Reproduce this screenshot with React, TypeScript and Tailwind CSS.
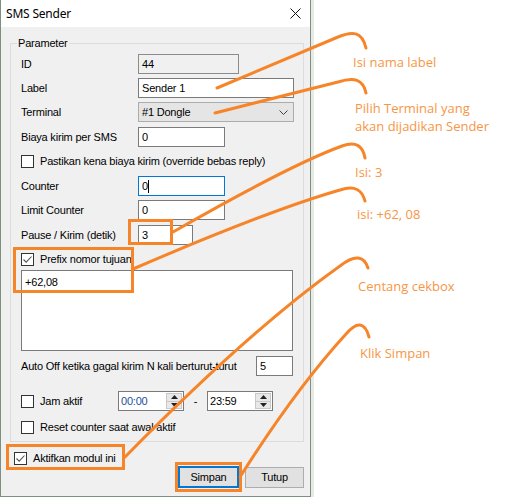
const Check = ({ checked = false }: { checked?: boolean }) => (
  <span className="w-[13px] h-[13px] border border-[#333333] bg-white flex items-center justify-center shrink-0">
    {checked && (
      <svg width="11" height="11" viewBox="0 0 11 11">
        <path d="M1.5 5.5 L4.2 8.2 L9.5 2.5" stroke="#555" strokeWidth="1.1" fill="none" />
      </svg>
    )}
  </span>
);

type FieldProps = { label: string; children: React.ReactNode; className?: string };

const Field = ({ label, children, className = "" }: FieldProps) => (
  <div className={`flex items-center h-[20px] ${className}`}>
    <span className="w-[117px] shrink-0">{label}</span>
    {children}
  </div>
);

const Spin = ({ value, blue = false }: { value: string; blue?: boolean }) => (
  <div className="w-[66px] h-[20px] border border-[#7a7a7a] bg-white flex items-center">
    <span className={`flex-1 pl-[2px] ${blue ? "text-[#1c4f9c]" : "text-black"}`}>{value}</span>
    <div className="w-[16px] h-[16px] mr-[1px] flex flex-col border border-[#c8c8c8] bg-[#e8e8e8]">
      <div className="flex-1 flex items-center justify-center border-b border-[#c8c8c8]">
        <svg width="7" height="4" viewBox="0 0 7 4">
          <path d="M0 4 L3.5 0 L7 4 Z" fill="#222" />
        </svg>
      </div>
      <div className="flex-1 flex items-center justify-center">
        <svg width="7" height="4" viewBox="0 0 7 4">
          <path d="M0 0 L3.5 4 L7 0 Z" fill="#222" />
        </svg>
      </div>
    </div>
  </div>
);

const Window = () => (
  <div className="w-[311px] h-[497px] shrink-0 border-l border-r border-b border-[#7f8f7f] bg-[#f0f0f0] flex flex-col text-[11px] tracking-[-0.2px] text-black font-['Liberation_Sans',Arial,sans-serif]">
    <div className="h-[27px] bg-white flex items-center justify-between pl-[5px] pr-[9px]">
      <span className="text-[12px] tracking-[-0.2px] font-['Noto_Sans',sans-serif]">SMS Sender</span>
      <svg width="11" height="11" viewBox="0 0 11 11">
        <path d="M0.5 0.5 L10.5 10.5 M10.5 0.5 L0.5 10.5" stroke="#111" strokeWidth="1" />
      </svg>
    </div>

    <div className="relative mt-[16px] ml-[9px] w-[294px] h-[399px] border border-[#dcdcdc] pt-[10px] pl-[10px] pr-[9px] flex flex-col">
      <span className="absolute -top-[8px] left-[6px] px-[1px] bg-[#f0f0f0] leading-[14px]">Parameter</span>

      <Field label="ID">
        <div className="w-[101px] h-[20px] border border-[#8c8c8c] bg-[#f0f0f0] flex items-center px-[3px]">44</div>
      </Field>
      <Field label="Label" className="mt-[4px]">
        <div className="w-[156px] h-[20px] border border-[#7a7a7a] bg-white flex items-center px-[3px]">Sender 1</div>
      </Field>
      <Field label="Terminal" className="mt-[4px]">
        <div className="w-[156px] h-[20px] border border-[#acacac] bg-[#e5e5e5] flex items-center justify-between pl-[3px] pr-[5px]">
          <span>#1 Dongle</span>
          <svg width="9" height="5" viewBox="0 0 9 5">
            <path d="M0.5 0.5 L4.5 4.5 L8.5 0.5" stroke="#444" strokeWidth="1" fill="none" />
          </svg>
        </div>
      </Field>
      <Field label="Biaya kirim per SMS" className="mt-[5px]">
        <div className="w-[87px] h-[20px] border border-[#7a7a7a] bg-white flex items-center px-[3px]">0</div>
      </Field>

      <div className="flex items-center h-[13px] mt-[8px] gap-[6px]">
        <Check />
        <span>Pastikan kena biaya kirim (override bebas reply)</span>
      </div>

      <Field label="Counter" className="mt-[8px]">
        <div className="w-[87px] h-[20px] border border-[#0078d7] bg-white flex items-center px-[3px]">
          <span>0</span>
          <span className="w-[1px] h-[13px] bg-black" />
        </div>
      </Field>
      <Field label="Limit Counter" className="mt-[4px]">
        <div className="w-[87px] h-[20px] border border-[#7a7a7a] bg-white flex items-center px-[3px]">0</div>
      </Field>
      <Field label="Pause / Kirim (detik)" className="mt-[5px]">
        <div className="w-[55px] h-[20px] border border-[#7a7a7a] bg-white flex items-center px-[3px]">3</div>
      </Field>

      <div className="flex items-center h-[13px] mt-[8px] gap-[6px]">
        <Check checked />
        <span>Prefix nomor tujuan</span>
      </div>
      <div className="mt-[4px] w-[272px] h-[81px] border border-[#7a7a7a] bg-white px-[3px] pt-[3px]">+62,08</div>

      <div className="flex items-center justify-between h-[20px] mt-[5px] w-[272px]">
        <span>Auto Off ketika gagal kirim N kali berturut-turut</span>
        <div className="w-[37px] h-[20px] border border-[#7a7a7a] bg-white flex items-center px-[3px]">5</div>
      </div>

      <div className="flex items-center h-[20px] mt-[15px]">
        <Check />
        <span className="ml-[6px] w-[78px]">Jam aktif</span>
        <Spin value="00:00" blue />
        <span className="w-[23px] text-center">-</span>
        <Spin value="23:59" />
      </div>

      <div className="flex items-center h-[13px] mt-[10px] gap-[6px]">
        <Check />
        <span>Reset counter saat awal aktif</span>
      </div>
    </div>

    <div className="flex items-center h-[13px] mt-[10px] ml-[13px] gap-[6px]">
      <Check checked />
      <span>Aktifkan modul ini</span>
    </div>
    <div className="flex justify-end items-end gap-[6px] pr-[6px] mt-[1px]">
      <button className="w-[61px] h-[22px] border-2 border-[#0078d7] bg-[#e1e1e1] flex items-center justify-center">Simpan</button>
      <button className="w-[59px] h-[21px] border border-[#adadad] bg-[#e1e1e1] flex items-center justify-center">Tutup</button>
    </div>
  </div>
);

const Notes = () => (
  <div className="flex flex-col text-[13px] leading-[18px] text-[#f79646] font-['Open_Sans',sans-serif]">
    <span className="mt-[53px] ml-[39px]">Isi nama label</span>
    <span className="mt-[28px] ml-[41px]">
      Pilih Terminal yang
      <br />
      akan dijadikan Sender
    </span>
    <span className="mt-[28px] ml-[41px]">Isi: 3</span>
    <span className="mt-[24px] ml-[43px]">isi: +62, 08</span>
    <span className="mt-[54px] ml-[44px]">Centang cekbox</span>
    <span className="mt-[49px] ml-[46px]">Klik Simpan</span>
  </div>
);

const Overlay = () => (
  <svg className="absolute inset-0 pointer-events-none" width="528" height="498" viewBox="0 0 528 498">
    <g stroke="#f6852a" strokeWidth="3" fill="none" strokeLinecap="round">
      <rect x="129.5" y="220.5" width="42" height="23" />
      <rect x="14.5" y="248.5" width="118" height="43" />
      <rect x="7.5" y="445.5" width="116" height="23" />
      <rect x="176.5" y="463.5" width="64" height="27" />
      <path d="M217 88 L338 37 C 352 31, 362 31, 366 48" />
      <path d="M215 113 L338 82 C 354 77, 363 79, 366 93" />
      <path d="M173 232 Q 290 165, 342 146 C 356 141, 363 146, 365 158" />
      <path d="M133 269 Q 270 210, 340 190 C 355 185, 362 190, 365 201" />
      <path d="M125 457 Q 250 330, 340 266 C 355 254, 364 256, 368 268" />
      <path d="M240 477 Q 295 390, 346 334 C 357 321, 365 322, 369 337" />
    </g>
  </svg>
);

export default function App() {
  return (
    <div className="w-[528px] h-[498px] bg-white relative overflow-hidden flex">
      <Window />
      <div className="w-[3px] h-[497px] bg-[#e6ebe6] shrink-0" />
      <Notes />
      <Overlay />
    </div>
  );
}
